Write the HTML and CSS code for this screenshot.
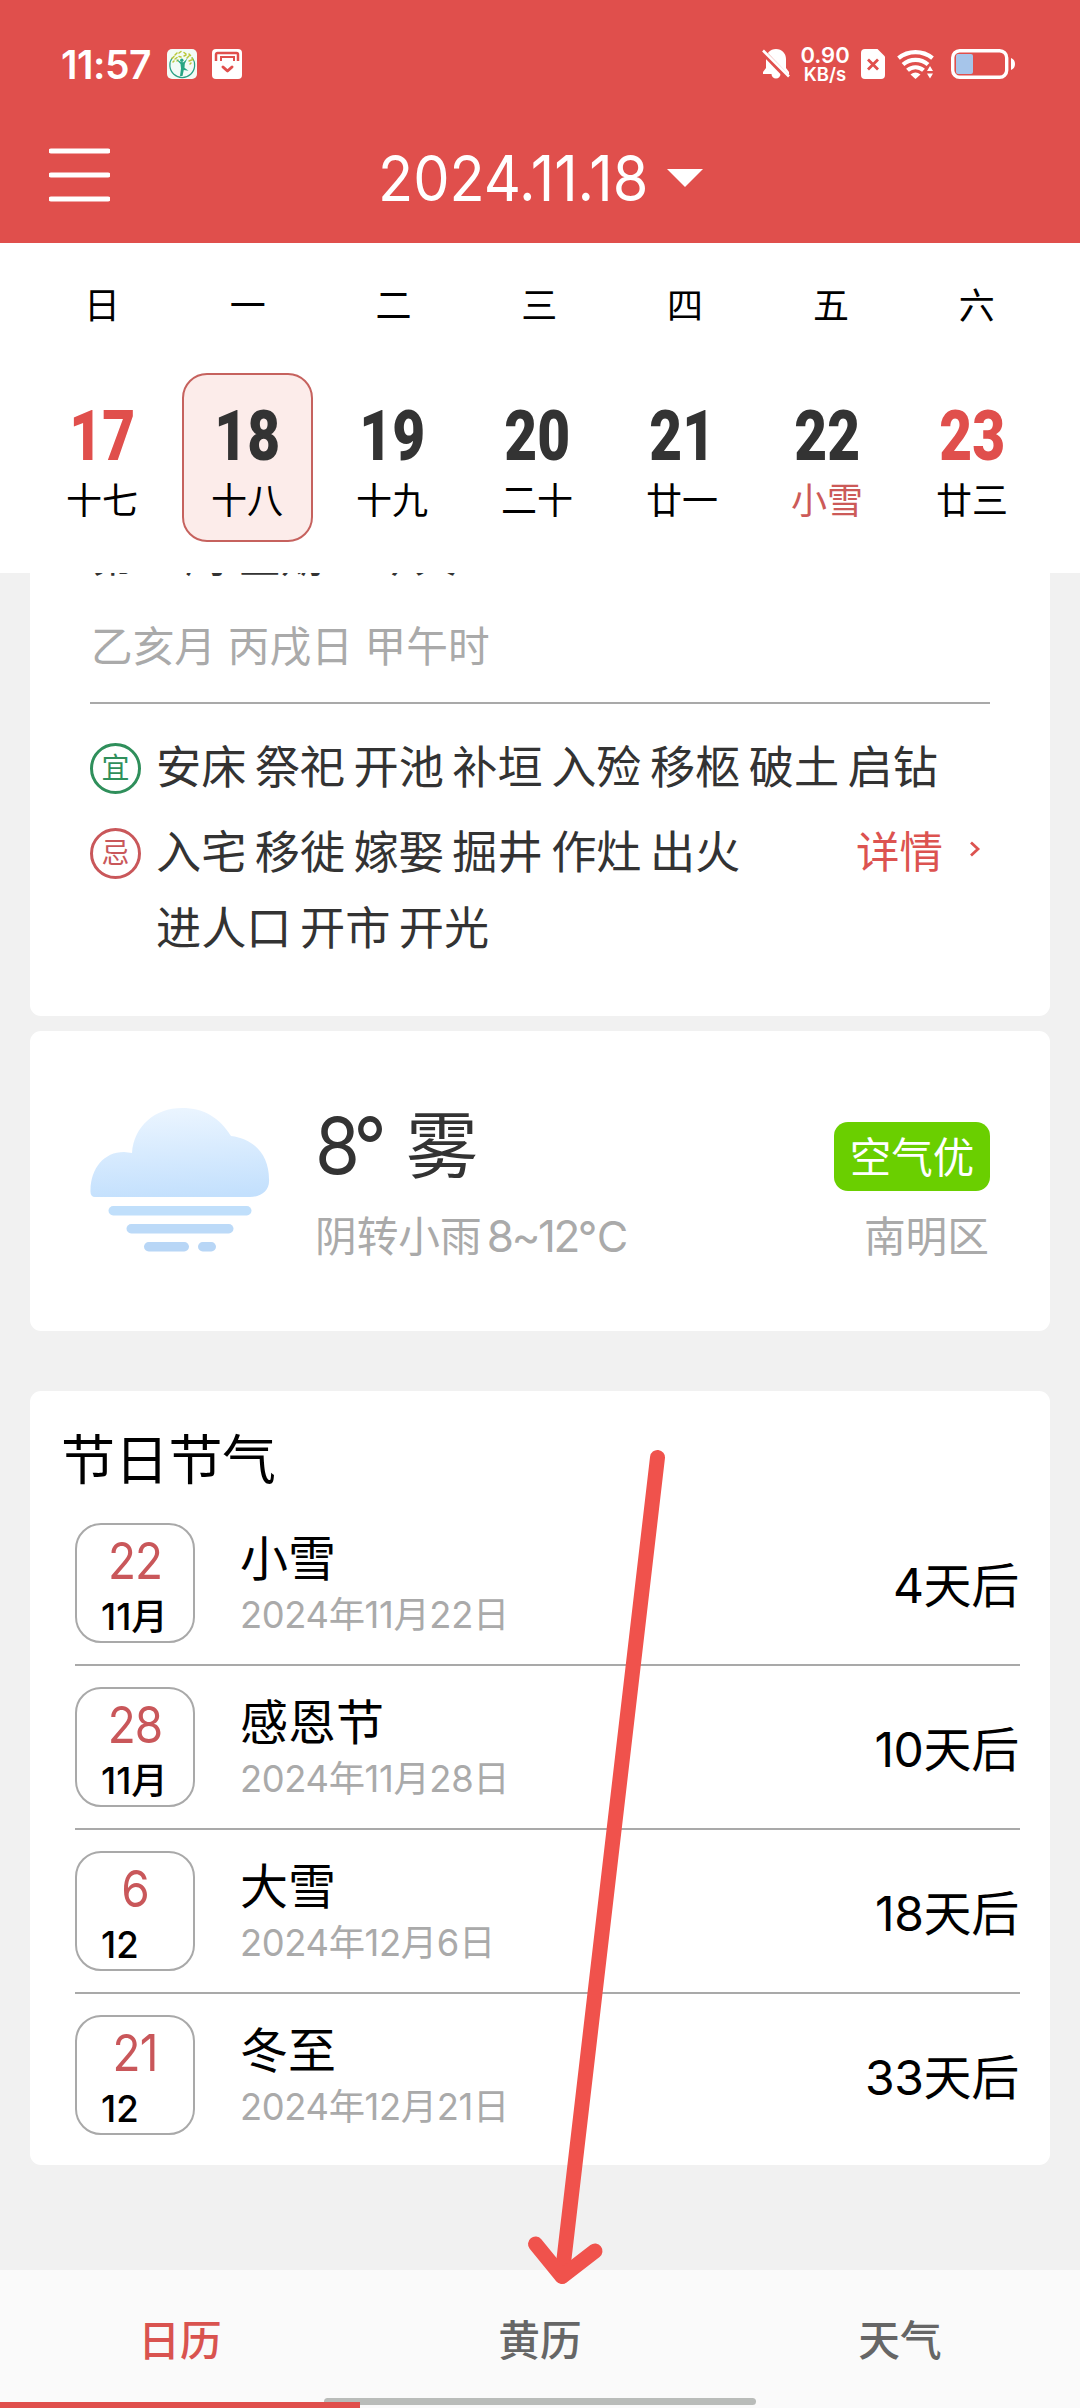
FILE: index.html
```html
<!DOCTYPE html>
<html lang="zh-CN">
<head>
<meta charset="utf-8">
<title>日历</title>
<link rel="stylesheet" href="styles.css">
</head>
<body>
<div class="screen">
  <header class="header">
    <div class="status">
      <div class="status-left">
        <span class="clock">11:57</span>
        <svg class="app-icon" width="30" height="30" viewBox="0 0 30 30">
          <rect width="30" height="30" rx="5" fill="#f3fbf6"/>
          <path d="M5.5 8.5A12.4 12.4 0 1 0 25 8.5" fill="none" stroke="#2aa084" stroke-width="1.2"/>
          <path d="M5 9.500l2-2M8 6l2-2M8 10l2-1.500M12 4l2-1.500M12 7.500l2 .5M17 3.500l2 1.500M17 7l2-1M20 9l2-2M22 5l1.500 1.500M22 12l2.500-1M25 9l1 2M6 13l1-1M10 12l1-1M23 15l1-1" stroke="#b9c73a" stroke-width="1.500" stroke-linecap="round"/>
          <path d="M9 10l4.500 5 .5 4.500-1 7.500h2.500l1.300-6 4.700.7-4-3 .3-4 2.700-5.500-4 4-2.500-.2z" fill="#27a583"/>
          <circle cx="14.800" cy="11.200" r="1.700" fill="#27a583"/>
        </svg>
        <svg class="bag-icon" width="30" height="30" viewBox="0 0 30 30">
          <rect width="30" height="30" rx="4" fill="#fff"/>
          <path d="M4 12V5.500a1.500 1.500 0 0 1 1.500-1.500h19A1.500 1.500 0 0 1 26 5.500V12" fill="none" stroke="#e04f4c" stroke-width="2.500"/>
          <path d="M9 12V8h13v4" fill="none" stroke="#e04f4c" stroke-width="2"/>
          <path d="M11 18l4.500 4 4.500-4" fill="none" stroke="#e04f4c" stroke-width="3" stroke-linecap="round" stroke-linejoin="round"/>
        </svg>
      </div>
      <div class="status-right">
        <svg width="28" height="32" viewBox="0 0 28 32">
          <path fill="#fff" d="M14 1c6 0 10 4.500 10 10v9l3 4v2H18.500a4.500 4.500 0 0 1-9 0H1v-2l3-4v-9C4 5.500 8 1 14 1z"/>
          <path d="M-1 2L27 31" stroke="#e04f4c" stroke-width="5.500"/>
          <path d="M1 2.500L27 28.500" stroke="#fff" stroke-width="2.600"/>
        </svg>
        <div class="speed"><span class="speed-value">0.90</span><span class="speed-unit">KB/s</span></div>
        <svg class="sim" width="24" height="30" viewBox="0 0 24 30">
          <path fill="#fff" d="M4 0h12.500L24 7.500V26a4 4 0 0 1-4 4H4a4 4 0 0 1-4-4V4a4 4 0 0 1 4-4z"/>
          <path d="M7 10.500l10 10M17 10.500l-10 10" stroke="#e04f4c" stroke-width="2.800"/>
        </svg>
        <svg class="wifi" width="38" height="30" viewBox="0 0 38 30">
          <g fill="none" stroke="#fff" stroke-width="4.200">
            <path d="M1.500 9.200A27 27 0 0 1 35.500 9.200"/>
            <path d="M6 15.500A19 19 0 0 1 31 15.500"/>
            <path d="M10.500 21.300A12 12 0 0 1 26.500 21.300"/>
          </g>
          <path fill="#fff" d="M13.500 25.500q5-4 10 0L18.500 30z"/>
          <path fill="#e04f4c" d="M28.500 17.500h9.500V30h-9.500z"/>
          <path fill="#fff" d="M30 22l3-5 3 5zM30 24.500h6l-3 5z"/>
        </svg>
        <svg class="battery" width="65" height="30" viewBox="0 0 65 30">
          <rect x="1.700" y="1.700" width="54" height="26.600" rx="7" fill="none" stroke="#fff" stroke-width="3.400"/>
          <rect x="5" y="5" width="17" height="20" rx="2" fill="#a6c5ea"/>
          <path d="M60 9q4 1.500 4 6t-4 6z" fill="#fff"/>
        </svg>
      </div>
    </div>
    <div class="toolbar">
      <svg class="menu" width="61" height="54" viewBox="0 0 61 54">
        <path d="M2 3h57M2 27h57M2 51h57" stroke="#fff" stroke-width="5" stroke-linecap="round"/>
      </svg>
      <div class="title">
        <span class="title-text">2024.11.18</span>
        <svg width="36" height="18" viewBox="0 0 36 18"><path d="M0 0h36L18 18z" fill="#fff"/></svg>
      </div>
    </div>
  </header>

  <section class="week">
    <div class="weekdays">
      <span>日</span><span>一</span><span>二</span><span>三</span><span>四</span><span>五</span><span>六</span>
    </div>
    <div class="days">
      <div class="day weekend"><b>17</b><span>十七</span></div>
      <div class="day selected"><b>18</b><span>十八</span></div>
      <div class="day"><b>19</b><span>十九</span></div>
      <div class="day"><b>20</b><span>二十</span></div>
      <div class="day"><b>21</b><span>廿一</span></div>
      <div class="day term"><b>22</b><span>小雪</span></div>
      <div class="day weekend"><b>23</b><span>廿三</span></div>
    </div>
  </section>

  <main class="content">
    <section class="card almanac">
      <div class="week-line">第47周 星期一 <span class="today">今天</span></div>
      <div class="ganzhi">乙亥月 丙戌日 甲午时</div>
      <div class="luck-row good">
        <span class="badge">宜</span>
        <p>安床 祭祀 开池 补垣 入殓 移柩 破土 启钻</p>
      </div>
      <div class="luck-row bad">
        <span class="badge">忌</span>
        <p>入宅 移徙 嫁娶 掘井 作灶 出火 进人口 开市 开光</p>
        <a class="more">详情
          <svg width="12" height="16" viewBox="0 0 12 16"><path d="M2 1.500L9 8l-7 6.500" fill="none" stroke="#dc5350" stroke-width="2.800"/></svg>
        </a>
      </div>
    </section>

    <section class="card weather">
      <svg class="cloud" width="180" height="146" viewBox="0 0 180 146">
        <defs>
          <linearGradient id="sky" x1="0.450" y1="0" x2="0.550" y2="1">
            <stop offset="0" stop-color="#ebf5ff"/><stop offset="1" stop-color="#c3e0fd"/>
          </linearGradient>
        </defs>
        <path fill="url(#sky)" d="M5 90Q0 90 .5 83C1 61 14 45 34 45L42 46C44 19 65 1 92 1C114 1 130 11 141 29C166 32 179 50 179 72C180 83 172 90 160 90z"/>
        <rect x="18.500" y="99" width="143" height="9.500" rx="4.700" fill="#c0dffb"/>
        <rect x="36.500" y="117" width="107" height="9.500" rx="4.700" fill="#bcdaf8"/>
        <rect x="54" y="135" width="45" height="9.500" rx="4.700" fill="#b8d6f6"/>
        <rect x="108" y="135" width="18" height="9.500" rx="4.700" fill="#b8d6f6"/>
      </svg>
      <div class="weather-main">
        <div class="temp"><span class="deg">8°</span>雾</div>
        <div class="range">阴转小雨<span class="range-num">8~12<span class="celsius">℃</span></span></div>
      </div>
      <div class="weather-side">
        <span class="air">空气优</span>
        <span class="district">南明区</span>
      </div>
    </section>

    <section class="card festivals">
      <h2>节日节气</h2>
      <ul>
        <li>
          <div class="date-box"><span class="d">22</span><span class="m">11月</span></div>
          <div class="info"><span class="name">小雪</span><span class="full">2024年11月22日</span></div>
          <span class="left">4天后</span>
        </li>
        <li>
          <div class="date-box"><span class="d">28</span><span class="m">11月</span></div>
          <div class="info"><span class="name">感恩节</span><span class="full">2024年11月28日</span></div>
          <span class="left">10天后</span>
        </li>
        <li>
          <div class="date-box"><span class="d">6</span><span class="m">12</span></div>
          <div class="info"><span class="name">大雪</span><span class="full">2024年12月6日</span></div>
          <span class="left">18天后</span>
        </li>
        <li>
          <div class="date-box"><span class="d">21</span><span class="m">12</span></div>
          <div class="info"><span class="name">冬至</span><span class="full">2024年12月21日</span></div>
          <span class="left">33天后</span>
        </li>
      </ul>
    </section>
  </main>

  <nav class="tabs">
    <a class="tab active">日历</a>
    <a class="tab">黄历</a>
    <a class="tab">天气</a>
    <span class="handle"></span>
  </nav>

  <svg class="arrow" width="80" height="850" viewBox="0 0 80 850">
    <g fill="none" stroke="#f0524c" stroke-width="15" stroke-linecap="round" stroke-linejoin="round">
      <path d="M129.500 10.500Q72 498 34 829"/>
      <path d="M7.500 797L34 829.500L67 804"/>
    </g>
  </svg>
</div>
</body>
</html>
```

FILE: styles.css
```css
* { box-sizing: border-box; }

body {
  margin: 0;
  font-family: Inter, "Noto Sans CJK SC", sans-serif;
  color: #000;
  background: #f1f1f1;
}

svg { display: block; flex: none; }

.screen {
  position: relative;
  display: flex;
  flex-direction: column;
  width: 1080px;
  height: 2408px;
  overflow: hidden;
}

/* header */
.header {
  flex: none;
  height: 243px;
  background: #e04f4c;
  color: #fff;
}

.status {
  display: flex;
  justify-content: space-between;
  align-items: center;
  height: 128px;
  padding: 0 64px 0 61px;
}

.status-left, .status-right { display: flex; align-items: center; }
.clock { width: 106px; font-size: 39px; font-weight: 600; letter-spacing: -0.5px; white-space: nowrap; }
.bag-icon { margin-left: 15px; }

.speed {
  display: flex;
  flex-direction: column;
  align-items: center;
  width: 48px;
  margin: 0 12px 0 11px;
  font-weight: 600;
}
.speed-value { font-size: 22px; line-height: 20px; }
.speed-unit { font-size: 18.500px; line-height: 19px; }
.wifi { margin-left: 12px; }
.battery { margin-left: 16px; }

.toolbar {
  display: grid;
  grid-template-columns: 1fr auto 1fr;
  align-items: center;
  height: 100px;
  padding: 0 49px;
}
.menu { margin-bottom: 6px; }
.title { display: flex; align-items: center; gap: 18px; }
.title-text {
  width: 271px;
  font-size: 63px;
  line-height: 80px;
  white-space: nowrap;
  transform: scaleX(0.915);
  transform-origin: left;
}

/* week strip */
.week {
  flex: none;
  height: 330px;
  background: #fff;
}
.weekdays {
  display: grid;
  grid-template-columns: repeat(7, 145.800px);
  height: 124px;
  padding-left: 29px;
  font-size: 36px;
  line-height: 126px;
  text-align: center;
}
.days {
  display: grid;
  grid-template-columns: repeat(7, 145px);
  justify-items: center;
  padding: 6px 0 0 29.500px;
}
.day {
  display: flex;
  flex-direction: column;
  align-items: center;
  width: 131px;
  height: 169px;
  padding-top: 21px;
  border: 2px solid transparent;
  border-radius: 25px;
}
.day b {
  font-family: Roboto, sans-serif;
  font-size: 71px;
  font-weight: 900;
  line-height: 80px;
  color: #333;
  transform: scaleX(0.800);
}
.day span { font-size: 36px; line-height: 50px; }
.weekend b { color: #e04f4c; }
.term span { color: #cc5a58; }
.selected { background: #fcecea; border-color: #c6625e; }

/* cards */
.content {
  flex: none;
  display: flex;
  flex-direction: column;
  height: 1697px;
  padding: 0 30px;
  overflow: hidden;
}
.card {
  flex: none;
  background: #fff;
  border-radius: 11px;
}

.almanac {
  height: 443px;
  padding: 0 60px;
  overflow: hidden;
  border-radius: 0 0 11px 11px;
}
.week-line {
  margin-top: -46px;
  padding-left: 2px;
  font-size: 42px;
  line-height: 60px;
  color: #333;
}
.today { margin-left: -4px; }
.ganzhi {
  margin-top: 30px;
  padding: 0 1px 25px;
  border-bottom: 2px solid #a9a9a9;
  font-size: 41.700px;
  line-height: 60px;
  color: #aaa;
}
.luck-row { display: flex; align-items: flex-start; height: 51px; }
.good { margin-top: 39px; }
.bad { margin-top: 34px; }
.luck-row p {
  width: 830px;
  margin: -13.500px 0 0 15px;
  font-size: 45.200px;
  line-height: 76px;
  word-spacing: -4.300px;
  color: #333;
}
.bad p { width: 620px; }
.badge {
  flex: none;
  width: 51px;
  height: 51px;
  border: 3px solid;
  border-radius: 50%;
  font-size: 28px;
  line-height: 45px;
  text-align: center;
}
.good .badge { color: #2f8f5b; }
.bad .badge { color: #c9575a; }
.more {
  display: flex;
  align-items: center;
  gap: 26px;
  margin: 0 9px 0 auto;
  font-size: 43.500px;
  line-height: 48px;
  color: #dc5350;
  white-space: nowrap;
}
.more svg { margin-bottom: 7px; }

.weather {
  display: flex;
  height: 300px;
  margin-top: 15px;
  padding: 0 60px;
}
.cloud { margin-top: 76px; }
.weather-main { margin: 74px 0 0 45px; }
.temp { font-size: 72px; line-height: 80px; color: #333; }
.deg {
  display: inline-block;
  width: 91px;
  font-size: 79px;
  line-height: 80px;
  letter-spacing: -6px;
  white-space: nowrap;
  vertical-align: -2px;
  transform: scaleX(0.920);
  transform-origin: left;
}
.range, .district { font-size: 41.700px; line-height: 50px; color: #aaa; }
.range { margin-top: 25px; white-space: nowrap; }
.range-num { margin-left: 5px; font-size: 44px; letter-spacing: -2.500px; }
.celsius { font-size: 43px; }
.weather-side {
  display: flex;
  flex-direction: column;
  align-items: flex-end;
  margin: 91px 0 0 auto;
}
.air {
  width: 156px;
  height: 69px;
  border-radius: 14px;
  background: #6acf00;
  color: #fff;
  font-size: 41.500px;
  line-height: 73px;
  text-align: center;
}
.district { margin: 21px 1px 0 0; }

.festivals {
  height: 774px;
  margin-top: 60px;
  padding: 29px 30px 0 45px;
}
.festivals h2 {
  margin: 1px 0 -2px -14px;
  font-size: 54px;
  font-weight: 400;
  line-height: 80px;
  letter-spacing: -0.300px;
}
.festivals ul { margin: 0; padding: 0; list-style: none; }
.festivals li {
  display: flex;
  height: 164px;
  padding-top: 21px;
  border-bottom: 2px solid #a9a9a9;
}
.festivals li:last-child { border-bottom: 0; }
.festivals li:first-child { height: 167px; padding-top: 24px; }
.date-box {
  display: flex;
  flex-direction: column;
  width: 120px;
  height: 120px;
  padding: 7px 0 0 24px;
  border: 2px solid #a9a9a9;
  border-radius: 26px;
}
.d {
  margin-left: -24px;
  font-size: 51px;
  line-height: 58px;
  letter-spacing: -1px;
  text-align: center;
  color: #c9575a;
  transform: scaleX(0.900);
}
.m { font-size: 36.500px; font-weight: 500; line-height: 54px; white-space: nowrap; }
.info { display: flex; flex-direction: column; margin-left: 45px; }
.name { font-size: 48px; line-height: 71px; }
.full { font-size: 36.300px; line-height: 42px; letter-spacing: -0.350px; color: #aaa; }
.left { margin: 0 1px 0 auto; font-size: 48px; line-height: 125px; letter-spacing: -0.300px; }

/* bottom tabs */
.tabs {
  position: relative;
  flex: none;
  display: grid;
  grid-template-columns: repeat(3, 1fr);
  height: 138px;
  background: #fafafa;
}
.tab {
  z-index: 1;
  font-size: 41.700px;
  font-weight: 500;
  line-height: 143px;
  height: 138px;
  text-align: center;
  color: #666;
  overflow: hidden;
}
.tab.active { color: #d9534f; border-bottom: 6px solid #e04f4c; }
.handle {
  position: absolute;
  left: 324px;
  bottom: 3px;
  width: 432px;
  height: 7px;
  border-radius: 4px;
  background: #b9bcb9;
}

.arrow {
  position: absolute;
  left: 528px;
  top: 1447px;
  overflow: visible;
}
```
